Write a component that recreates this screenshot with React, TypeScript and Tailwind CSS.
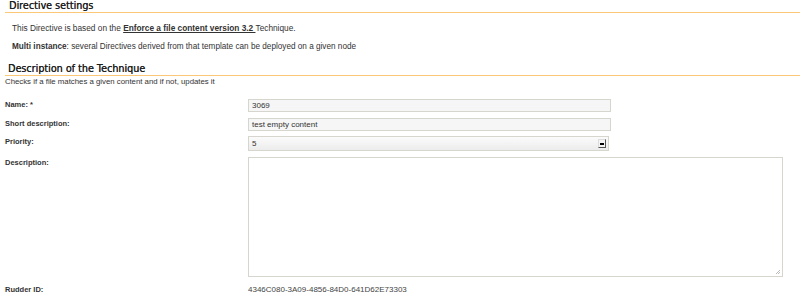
import React from "react";

function Row({ label, children, h, labelTop }: { label: string; children: React.ReactNode; h: string; labelTop: string }) {
  return (
    <div className={`flex ${h}`}>
      <div className={`w-[243px] shrink-0 font-bold text-[7.5px] leading-[10px] text-[#333] ${labelTop}`}>{label}</div>
      <div className="flex-1">{children}</div>
    </div>
  );
}

export default function App() {
  return (
    <div className="w-[800px] h-[297px] bg-white overflow-hidden text-[#333]" style={{ fontFamily: '"Liberation Sans", Arial, sans-serif' }}>
      <div className="ml-[5px] h-[13px] border-b border-[#fbc877] pl-[4px]">
        <div className="text-[9.6px] leading-[12px] font-medium text-[#1f1f1f] [text-shadow:0.3px_0_0_#1f1f1f]" style={{ fontFamily: '"DejaVu Sans", sans-serif' }}>Directive settings</div>
      </div>
      <div className="pl-[12px] pt-[10px] text-[8.3px] leading-[10px] text-[#333]">
        This Directive is based on the <span className="font-bold underline">Enforce a file content version 3.2 </span>Technique.
      </div>
      <div className="pl-[12px] pt-[9px] text-[8.2px] leading-[10px] text-[#333]">
        <span className="font-bold">Multi instance</span>: several Directives derived from that template can be deployed on a given node
      </div>
      <div className="ml-[5px] mt-[11px] h-[13px] border-b border-[#fbc877] pl-[3px]">
        <div className="text-[9.6px] leading-[12px] font-medium text-[#1f1f1f] [text-shadow:0.3px_0_0_#1f1f1f]" style={{ fontFamily: '"DejaVu Sans", sans-serif' }}>Description of the Technique</div>
      </div>
      <div className="pl-[5px] pt-[1px] text-[7.8px] leading-[10px] text-[#333]">Checks if a file matches a given content and if not, updates it</div>
      <div className="pl-[5px] pt-[12px]">
        <Row label="Name: *" h="h-[19px]" labelTop="pt-[1px]">
          <div className="w-[363px] h-[13px] border border-[#d6d6ce] bg-[#f6f6f6] pl-[3px] text-[8px] leading-[11px] text-[#333]">3069</div>
        </Row>
        <Row label="Short description:" h="h-[18px]" labelTop="pt-[1px]">
          <div className="w-[363px] h-[13px] border border-[#d6d6ce] bg-[#f6f6f6] pl-[3px] text-[8px] leading-[11px] text-[#333]">test empty content</div>
        </Row>
        <Row label="Priority:" h="h-[21px]" labelTop="pt-[1px]">
          <div className="w-[361px] h-[15px] border border-[#d6d6ce] bg-gradient-to-b from-[#fbfbfb] to-[#ececec] pl-[3px] text-[8px] leading-[13px] text-[#333] flex justify-between items-center pr-[2px]">
            <span>5</span>
            <span className="w-[8px] h-[9px] border-t border-l border-[#ddd] border-r-[#555] border-b-[#555] border-r border-b bg-[#f4f4f4] flex items-center justify-center">
              <span className="block w-[4px] h-[2px] bg-black"></span>
            </span>
          </div>
        </Row>
        <Row label="Description:" h="h-[128px]" labelTop="pt-[1px]">
          <div className="relative w-[535px] h-[120px] border border-[#d6d6ce] bg-white">
            <svg className="absolute right-[1px] bottom-[1px]" width="6" height="6" viewBox="0 0 6 6">
              <path d="M5 1L1 5M5 3L3 5" stroke="#bbb" strokeWidth="1" />
            </svg>
          </div>
        </Row>
        <Row label="Rudder ID:" h="h-[12px]" labelTop="pt-[0px]">
          <div className="text-[8px] leading-[10px] text-[#444]">4346C080-3A09-4856-84D0-641D62E73303</div>
        </Row>
      </div>
    </div>
  );
}
